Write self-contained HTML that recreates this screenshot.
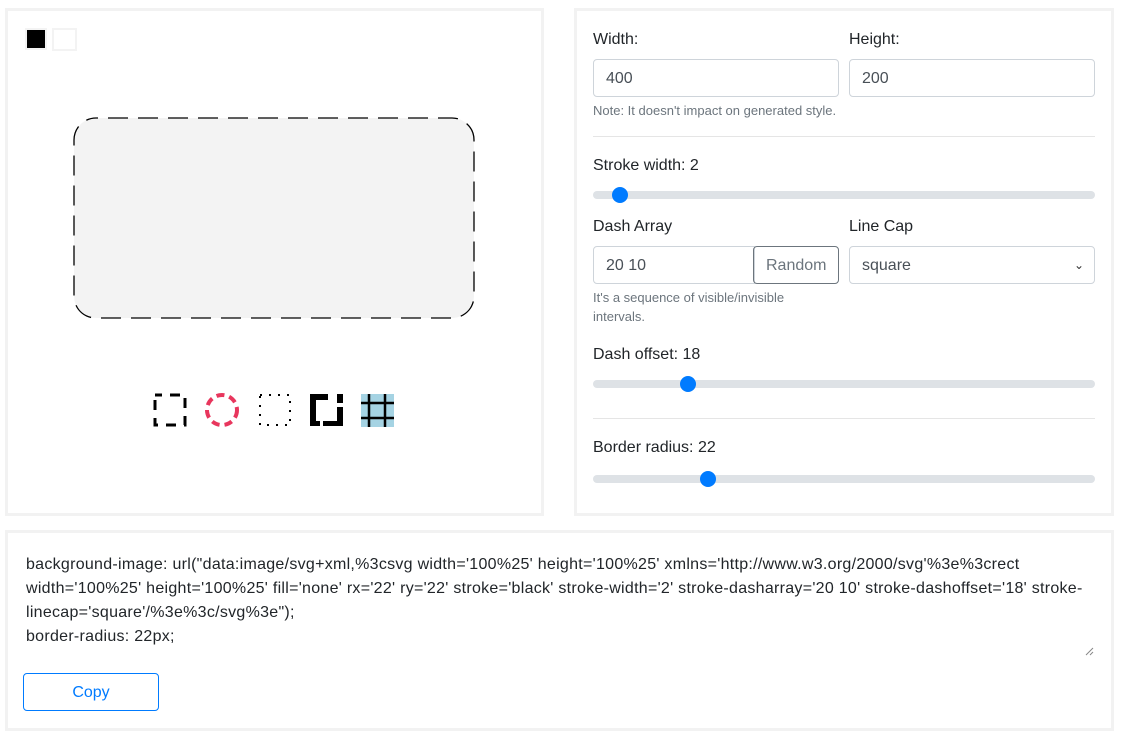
<!DOCTYPE html>
<html><head><meta charset="utf-8"><style>
*{box-sizing:border-box;margin:0;padding:0}
body{width:1123px;height:735px;background:#fff;font-family:"Liberation Sans",Arial,sans-serif;color:#212529;position:relative;overflow:hidden}
.a{position:absolute}
.panel{position:absolute;border:3px solid #f2f2f2}
.lbl{position:absolute;font-size:16px;color:#212529}
.inp{position:absolute;border:1px solid #ced4da;border-radius:4px;height:38px;font-size:16px;color:#495057;padding:9px 12px;line-height:20px}
.small{position:absolute;font-size:13px;color:#6c757d;line-height:19px}
.track{position:absolute;left:593px;width:502px;height:8px;background:#dee2e6;border-radius:4px}
.thumb{position:absolute;width:16px;height:16px;border-radius:50%;background:#007bff;top:-4px}
.hr{position:absolute;left:593px;width:502px;height:1px;background:#e5e5e5}
</style></head><body>
<div class="panel" style="left:5px;top:8px;width:539px;height:508px"></div>
<div class="panel" style="left:574px;top:8px;width:540px;height:508px"></div>
<div class="panel" style="left:5px;top:530px;width:1109px;height:201px"></div>

<div class="a" style="left:25px;top:28px;width:22px;height:22px;background:#000;border:2px solid #f3f3f3"></div>
<div class="a" style="left:52px;top:28px;width:25px;height:23px;background:#fff;border:2px solid #f3f3f3"></div>

<svg class="a" style="left:72px;top:116px" width="404" height="204"><rect x="2" y="2" width="400" height="200" rx="22" ry="22" fill="#f3f3f3" stroke="#000" stroke-width="1.3" stroke-dasharray="20 10" stroke-dashoffset="18"/></svg>

<svg class="a" style="left:150px;top:390px" width="250" height="40">
<rect x="5" y="5" width="30" height="30" fill="none" stroke="#000" stroke-width="3" stroke-dasharray="10 8" stroke-dashoffset="3"/>
<circle cx="72" cy="20" r="15" fill="none" stroke="#e8365d" stroke-width="4" stroke-dasharray="8 5"/>
<rect x="110" y="5" width="30" height="30" fill="none" stroke="#000" stroke-width="2" stroke-dasharray="2 7"/>
<g fill="#000">
<rect x="160" y="4" width="18" height="6"/>
<rect x="160" y="4" width="6" height="27"/>
<rect x="160" y="31" width="10" height="5"/>
<rect x="173" y="31" width="20" height="5"/>
<rect x="187" y="4" width="6" height="9"/>
<rect x="187" y="17" width="6" height="19"/>
</g>
<rect x="211" y="4" width="33" height="33" fill="#a5d3e3"/>
<path d="M211 13h33M211 28h33M219 4v33M235 4v33" stroke="#000" stroke-width="2.5"/>
</svg>

<div class="lbl" style="left:593px;top:31px">Width:</div>
<div class="lbl" style="left:849px;top:31px">Height:</div>
<div class="inp" style="left:593px;top:59px;width:246px">400</div>
<div class="inp" style="left:849px;top:59px;width:246px">200</div>
<div class="small" style="left:593px;top:101px">Note: It doesn't impact on generated style.</div>
<div class="hr" style="top:136px"></div>
<div class="lbl" style="left:593px;top:157px">Stroke width: 2</div>
<div class="track" style="top:191px"><div class="thumb" style="left:19px"></div></div>
<div class="lbl" style="left:593px;top:218px">Dash Array</div>
<div class="lbl" style="left:849px;top:218px">Line Cap</div>
<div class="inp" style="left:593px;top:246px;width:162px;border-radius:4px 0 0 4px">20 10</div>
<div class="inp" style="left:753px;top:246px;width:86px;border-color:#6c757d;color:#6c757d;padding:9px 12px">Random</div>
<div class="inp" style="left:849px;top:246px;width:246px">square<span style="position:absolute;right:10px;top:8px;font-size:12px;color:#333">&#8964;</span></div>
<div class="small" style="left:593px;top:288px;width:240px">It's a sequence of visible/invisible intervals.</div>
<div class="lbl" style="left:593px;top:346px">Dash offset: 18</div>
<div class="track" style="top:380px"><div class="thumb" style="left:87px"></div></div>
<div class="hr" style="top:418px"></div>
<div class="lbl" style="left:593px;top:439px">Border radius: 22</div>
<div class="track" style="top:475px"><div class="thumb" style="left:107px"></div></div>

<div class="a" style="left:26px;top:553px;white-space:nowrap;font-size:16px;line-height:24px;letter-spacing:0.28px;color:#212529">background-image: url("data:image/svg+xml,%3csvg width='100%25' height='100%25' xmlns='http://www.w3.org/2000/svg'%3e%3crect<br>width='100%25' height='100%25' fill='none' rx='22' ry='22' stroke='black' stroke-width='2' stroke-dasharray='20 10' stroke-dashoffset='18' stroke-<br>linecap='square'/%3e%3c/svg%3e");<br>border-radius: 22px;</div>
<svg class="a" style="left:1084px;top:646px" width="10" height="10"><path d="M9 2L2 9M9 6L6 9" stroke="#888" stroke-width="1"/></svg>
<div class="a" style="left:23px;top:673px;width:136px;height:38px;border:1px solid #007bff;border-radius:4px;color:#007bff;font-size:16px;text-align:center;line-height:38px">Copy</div>
</body></html>
